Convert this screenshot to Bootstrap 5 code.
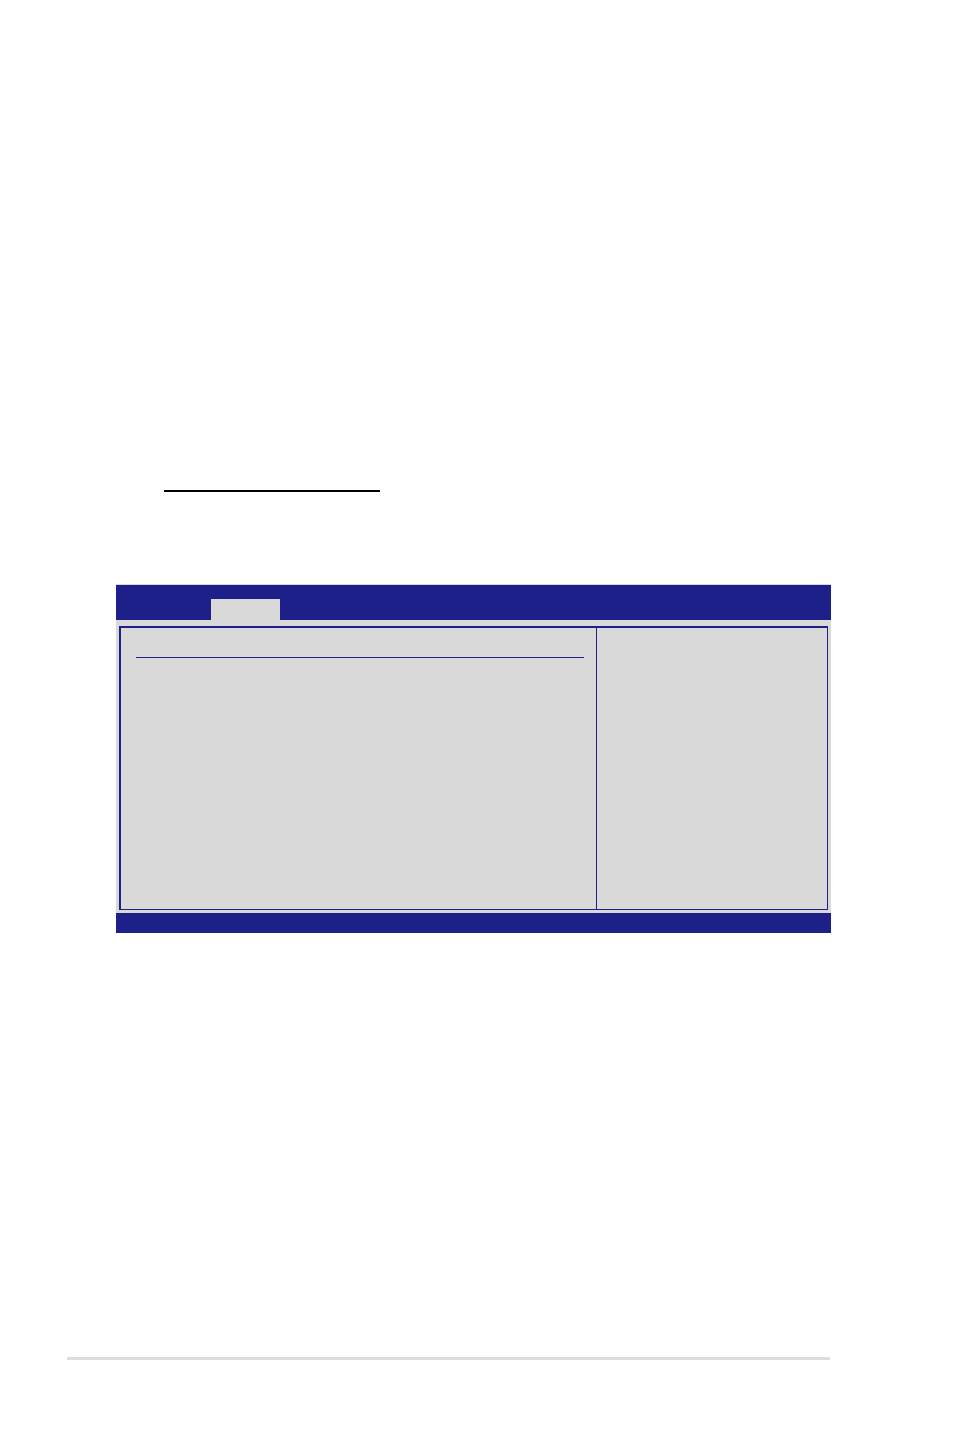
<!DOCTYPE html>
<html lang="en">
<head>
<meta charset="utf-8">
<meta name="viewport" content="width=device-width, initial-scale=1">
<title>Setup screen</title>
<link href="https://cdn.jsdelivr.net/npm/bootstrap@5.3.0/dist/css/bootstrap.min.css" rel="stylesheet">
<style>
  :root { --navy: #1d2088; --panel: #d9d9d9; }
  body { font-family: "Liberation Sans", Arial, sans-serif; }
  .sheet { padding: 490px 123px 77px 116px; }
  .heading-rule { width: 216px; height: 2px; margin: 0 0 92px 48px; background: #000; }
  .setup { background: var(--panel); border-top: 1px solid var(--panel); }
  .menu-bar { height: 35px; padding-left: 95px; background: var(--navy); }
  .menu-tab { width: 69px; height: 21px; background: var(--panel); }
  .frame { min-height: 284px; margin: 6px 3px 3px; border: 1px solid var(--navy); border-top-width: 2px; border-left-width: 2px; }
  .settings { padding: 29px 12px 0 15px; }
  .settings-rule { height: 1px; background: var(--navy); }
  .help { width: 231px; border-left: 1px solid var(--navy); }
  .key-bar { height: 20px; background: var(--navy); }
  .page-rule { height: 3px; margin: 0 1px 0 -49px; background: #dcdddd; }
</style>
</head>
<body class="bg-white">
<main class="sheet d-flex flex-column min-vh-100">
  <div class="heading-rule"></div>
  <section class="setup" aria-label="Setup">
    <header class="menu-bar d-flex align-items-end">
      <div class="menu-tab"></div>
    </header>
    <div class="frame d-flex">
      <div class="settings flex-grow-1">
        <div class="settings-rule"></div>
      </div>
      <aside class="help flex-shrink-0"></aside>
    </div>
    <footer class="key-bar"></footer>
  </section>
  <div class="page-rule mt-auto"></div>
</main>
<script src="https://cdn.jsdelivr.net/npm/bootstrap@5.3.0/dist/js/bootstrap.bundle.min.js"></script>
</body>
</html>
